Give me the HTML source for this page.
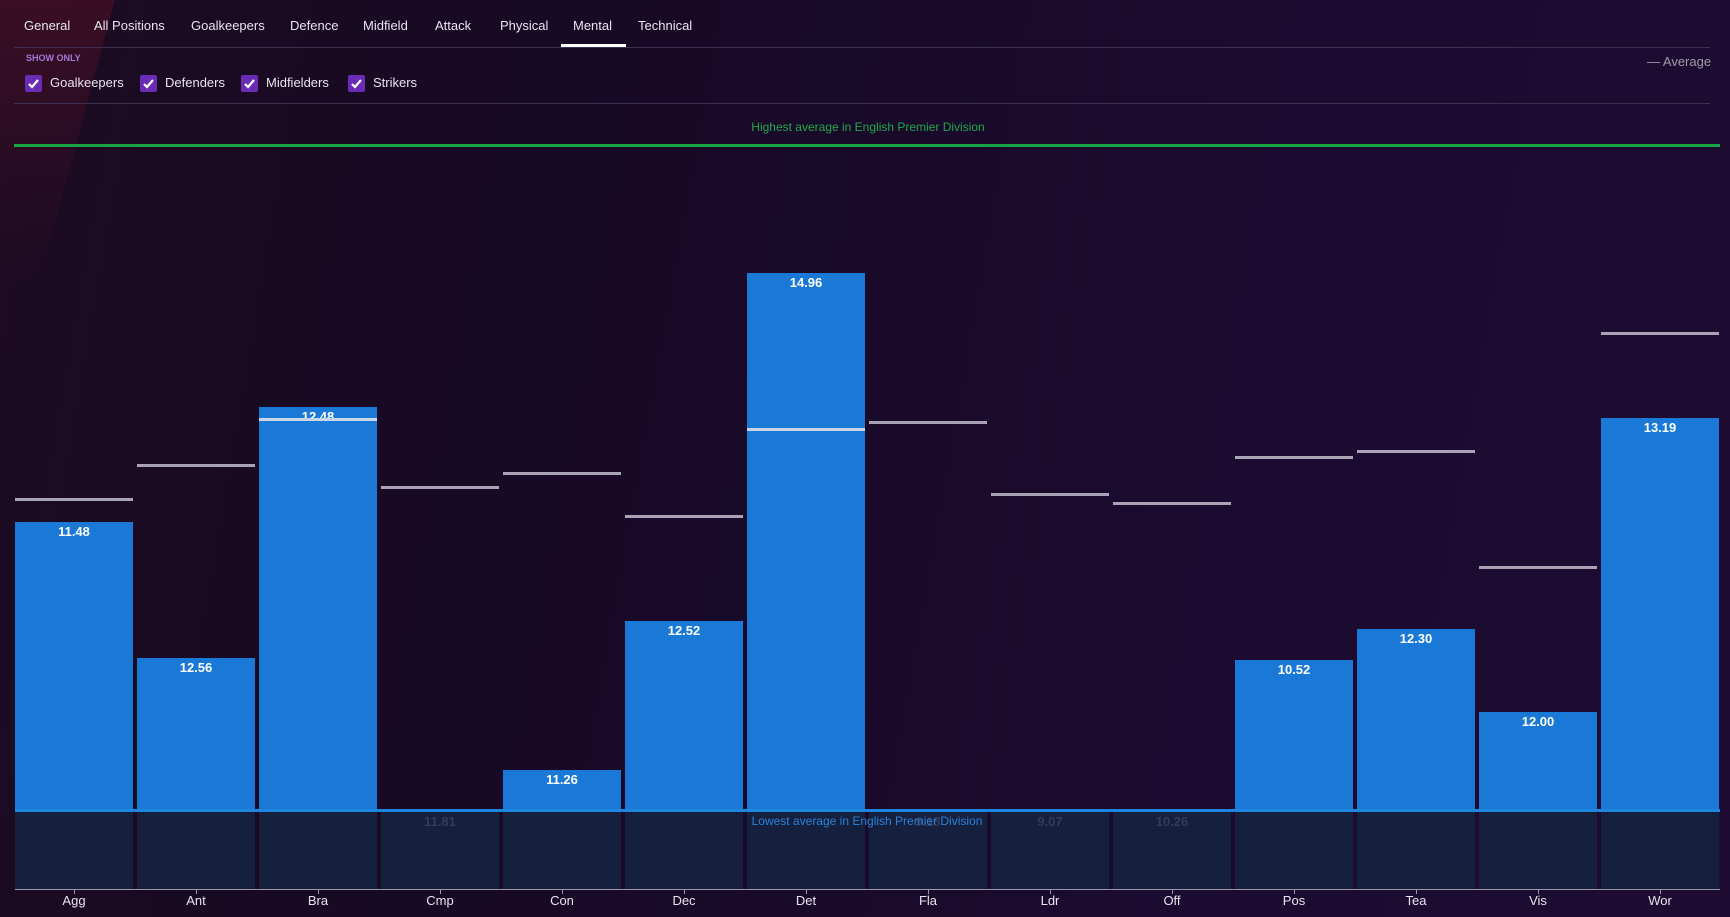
<!DOCTYPE html>
<html><head><meta charset="utf-8"><style>
*{margin:0;padding:0;box-sizing:border-box}
body{width:1730px;height:917px;overflow:hidden;background:linear-gradient(100deg,#1c0b22 0%,#170a25 30%,#1b0b30 70%,#1e0c33 100%);font-family:"Liberation Sans",sans-serif;position:relative;color:#e6e3ea}
.a{position:absolute}
.tab{position:absolute;top:18px;font-size:13px;color:#e8e4ee}
.cb{position:absolute;top:75px;width:17px;height:17px;background:#6a2bb5;border-radius:2px}
.cb svg{position:absolute;left:2px;top:2px}
.cl{position:absolute;top:75px;font-size:13px;color:#e8e4ee}
.bar{position:absolute;width:118px;background:#1a78d6;bottom:107px}
.val{position:absolute;width:118px;text-align:center;font-size:13px;font-weight:bold;color:#fff}
.avg{position:absolute;width:118px;height:3px;background:#aaa3b5}
.low{position:absolute;top:812px;height:77px;width:118px;background:#15203f}
.lv{position:absolute;top:814px;width:118px;text-align:center;font-size:13px;font-weight:bold;color:#353a58}
.lab{position:absolute;top:893px;width:118px;text-align:center;font-size:13px;color:#e8e4ee}
.tick{position:absolute;top:889px;width:1px;height:5px;background:#9a97a8}
</style></head><body>
<div class="a" style="left:-40px;top:-20px;width:120px;height:300px;background:linear-gradient(180deg,rgba(120,20,40,.35),rgba(60,10,30,0));transform:skewX(-15deg)"></div>
<div class="tab" style="left:24px">General</div>
<div class="tab" style="left:94px">All Positions</div>
<div class="tab" style="left:191px">Goalkeepers</div>
<div class="tab" style="left:290px">Defence</div>
<div class="tab" style="left:363px">Midfield</div>
<div class="tab" style="left:435px">Attack</div>
<div class="tab" style="left:500px">Physical</div>
<div class="tab" style="left:573px">Mental</div>
<div class="tab" style="left:638px">Technical</div>
<div class="a" style="left:561px;top:44px;width:65px;height:3px;background:#fff"></div>
<div class="a" style="left:14px;top:47px;width:1696px;height:1px;background:#3e3050"></div>
<div class="a" style="left:26px;top:53px;font-size:9px;font-weight:bold;color:#a27ad8">SHOW ONLY</div>
<div class="cb" style="left:25px"><svg width="13" height="13" viewBox="0 0 13 13"><path d="M2 7l3 3 6-7" stroke="#fff" stroke-width="2.2" fill="none"/></svg></div>
<div class="cl" style="left:50px">Goalkeepers</div>
<div class="cb" style="left:140px"><svg width="13" height="13" viewBox="0 0 13 13"><path d="M2 7l3 3 6-7" stroke="#fff" stroke-width="2.2" fill="none"/></svg></div>
<div class="cl" style="left:165px">Defenders</div>
<div class="cb" style="left:241px"><svg width="13" height="13" viewBox="0 0 13 13"><path d="M2 7l3 3 6-7" stroke="#fff" stroke-width="2.2" fill="none"/></svg></div>
<div class="cl" style="left:266px">Midfielders</div>
<div class="cb" style="left:348px"><svg width="13" height="13" viewBox="0 0 13 13"><path d="M2 7l3 3 6-7" stroke="#fff" stroke-width="2.2" fill="none"/></svg></div>
<div class="cl" style="left:373px">Strikers</div>
<div class="a" style="left:1647px;top:54px;font-size:13px;color:#a09aa8">— Average</div>
<div class="a" style="left:14px;top:103px;width:1696px;height:1px;background:#3e3050"></div>
<div class="a" style="left:0;width:1730px;top:120px;text-align:center;font-size:12px;color:#1fa84a;padding-left:6px">Highest average in English Premier Division</div>
<div class="a" style="left:14px;top:144px;width:1706px;height:3px;background:#1aa544"></div>

<div class="low" style="left:15px"></div><div class="low" style="left:137px"></div><div class="low" style="left:259px"></div><div class="low" style="left:381px"></div><div class="low" style="left:503px"></div><div class="low" style="left:625px"></div><div class="low" style="left:747px"></div><div class="low" style="left:869px"></div><div class="low" style="left:991px"></div><div class="low" style="left:1113px"></div><div class="low" style="left:1235px"></div><div class="low" style="left:1357px"></div><div class="low" style="left:1479px"></div><div class="low" style="left:1601px"></div>
<div class="lv" style="left:381px">11.81</div><div class="lv" style="left:869px">9.18</div><div class="lv" style="left:991px">9.07</div><div class="lv" style="left:1113px">10.26</div>

<div class="bar" style="left:15px;top:522px"></div><div class="val" style="left:15px;top:524px">11.48</div>
<div class="bar" style="left:137px;top:658px"></div><div class="val" style="left:137px;top:660px">12.56</div>
<div class="bar" style="left:259px;top:407px"></div><div class="val" style="left:259px;top:409px">12.48</div>
<div class="bar" style="left:503px;top:770px"></div><div class="val" style="left:503px;top:772px">11.26</div>
<div class="bar" style="left:625px;top:621px"></div><div class="val" style="left:625px;top:623px">12.52</div>
<div class="bar" style="left:747px;top:273px"></div><div class="val" style="left:747px;top:275px">14.96</div>
<div class="bar" style="left:1235px;top:660px"></div><div class="val" style="left:1235px;top:662px">10.52</div>
<div class="bar" style="left:1357px;top:629px"></div><div class="val" style="left:1357px;top:631px">12.30</div>
<div class="bar" style="left:1479px;top:712px"></div><div class="val" style="left:1479px;top:714px">12.00</div>
<div class="bar" style="left:1601px;top:418px"></div><div class="val" style="left:1601px;top:420px">13.19</div>

<div class="avg" style="left:15px;top:498px"></div>
<div class="avg" style="left:137px;top:464px"></div>
<div class="avg" style="left:259px;top:418px;background:#c9d6ea"></div>
<div class="avg" style="left:381px;top:486px"></div>
<div class="avg" style="left:503px;top:472px"></div>
<div class="avg" style="left:625px;top:515px"></div>
<div class="avg" style="left:747px;top:428px;background:#c9d6ea"></div>
<div class="avg" style="left:869px;top:421px"></div>
<div class="avg" style="left:991px;top:493px"></div>
<div class="avg" style="left:1113px;top:502px"></div>
<div class="avg" style="left:1235px;top:456px"></div>
<div class="avg" style="left:1357px;top:450px"></div>
<div class="avg" style="left:1479px;top:566px"></div>
<div class="avg" style="left:1601px;top:332px"></div>

<div class="a" style="left:15px;top:809px;width:1705px;height:3px;background:#1f86e0"></div>
<div class="a" style="left:0;width:1730px;top:814px;text-align:center;font-size:12px;color:#2a82d8;padding-left:4px">Lowest average in English Premier Division</div>
<div class="a" style="left:15px;top:889px;width:1705px;height:1px;background:#9a97a8"></div>
<div class="tick" style="left:74px"></div><div class="tick" style="left:196px"></div><div class="tick" style="left:318px"></div><div class="tick" style="left:440px"></div><div class="tick" style="left:562px"></div><div class="tick" style="left:684px"></div><div class="tick" style="left:806px"></div><div class="tick" style="left:928px"></div><div class="tick" style="left:1050px"></div><div class="tick" style="left:1172px"></div><div class="tick" style="left:1294px"></div><div class="tick" style="left:1416px"></div><div class="tick" style="left:1538px"></div><div class="tick" style="left:1660px"></div>
<div class="lab" style="left:15px">Agg</div><div class="lab" style="left:137px">Ant</div><div class="lab" style="left:259px">Bra</div><div class="lab" style="left:381px">Cmp</div><div class="lab" style="left:503px">Con</div><div class="lab" style="left:625px">Dec</div><div class="lab" style="left:747px">Det</div><div class="lab" style="left:869px">Fla</div><div class="lab" style="left:991px">Ldr</div><div class="lab" style="left:1113px">Off</div><div class="lab" style="left:1235px">Pos</div><div class="lab" style="left:1357px">Tea</div><div class="lab" style="left:1479px">Vis</div><div class="lab" style="left:1601px">Wor</div>
</body></html>
